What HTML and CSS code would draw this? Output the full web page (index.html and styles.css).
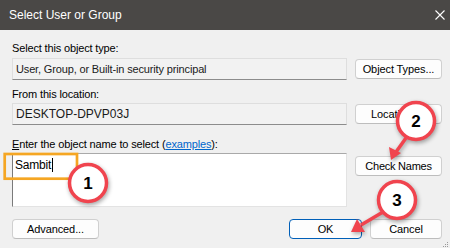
FILE: index.html
```html
<!DOCTYPE html>
<html lang="en">

<head>
    <meta charset="UTF-8">
    <meta name="viewport" content="width=device-width, initial-scale=1.0">
    <title>Select User or Group</title>
    <link rel="stylesheet" href="styles.css">
</head>

<body>
    <div class="window">
        <div class="titlebar">
            <span class="title">Select User or Group</span>
            <svg class="close" width="10" height="10" viewBox="0 0 10 10">
                <path d="M0.5 0.5 L9.5 9.5 M9.5 0.5 L0.5 9.5" stroke="#fff" stroke-width="1.1" />
            </svg>
        </div>

        <div class="content">
            <div class="label first">Select this object type:</div>
            <div class="row">
                <div class="field">User, Group, or Built-in security principal</div>
                <button class="btn">Object Types...</button>
            </div>

            <div class="label second">From this location:</div>
            <div class="row">
                <div class="field host">DESKTOP-DPVP03J</div>
                <button class="btn">Locations...</button>
            </div>

            <div class="label third"><u>E</u>nter the object name to select (<a href="#">examples</a>):</div>
            <div class="row top">
                <div class="names">Sambit<span class="caret"></span></div>
                <button class="btn check">Check Names</button>
            </div>

            <div class="footer">
                <button class="btn">Advanced...</button>
                <div class="actions">
                    <button class="btn ok">OK</button>
                    <button class="btn cancel">Cancel</button>
                </div>
            </div>
        </div>

        <!-- resize grip -->
        <svg class="grip" width="7" height="7" viewBox="0 0 7 7">
            <rect x="5" y="1" width="1" height="1" fill="#9a9a9a" />
            <rect x="3" y="3" width="1" height="1" fill="#9a9a9a" />
            <rect x="5" y="3" width="1" height="1" fill="#9a9a9a" />
            <rect x="1" y="5" width="1" height="1" fill="#9a9a9a" />
            <rect x="3" y="5" width="1" height="1" fill="#9a9a9a" />
            <rect x="5" y="5" width="1" height="1" fill="#9a9a9a" />
        </svg>

        <!-- tutorial annotations drawn over the dialog -->
        <svg class="marks" width="450" height="248" viewBox="0 0 450 248">
            <rect class="box" x="4.7" y="154" width="72.3" height="24.7" />

            <g class="shadow">
                <line class="arrow" x1="406" y1="138" x2="396" y2="152" />
                <polygon class="head" points="391,160 389,147 401,153" />
                <line class="arrow" x1="383" y1="212" x2="361" y2="225" />
                <polygon class="head" points="351,232 357,219 365,232" />

                <circle class="ring" cx="88" cy="183" r="18.5" />
                <circle class="ring" cx="416" cy="121" r="18.5" />
                <circle class="ring" cx="397" cy="200" r="18.5" />
            </g>

            <text class="num" x="88" y="189">1</text>
            <text class="num" x="416" y="127">2</text>
            <text class="num" x="397" y="206">3</text>
        </svg>
    </div>
</body>

</html>
```

FILE: styles.css
```css
body {
    margin: 0;
    font-family: "Liberation Sans", Arial, sans-serif;
    font-size: 11px;
    letter-spacing: -0.15px;
    color: #000;
    background: #f0f0f0;
}

.window {
    position: relative;
    width: 450px;
    height: 248px;
    overflow: hidden;
    background: #f0f0f0;
}

.titlebar {
    height: 30px;
    background: #4a4846;
    display: flex;
    align-items: center;
    justify-content: space-between;
    padding: 0 5px 0 9px;
    box-sizing: border-box;
}

.title {
    color: #fff;
    font-size: 12px;
    letter-spacing: 0;
    padding-bottom: 1px;
}

.content {
    padding: 10px 8px 0 12px;
}

.label {
    height: 16px;
    line-height: 16px;
}

.label.first {
    margin-bottom: 2px;
}

.label.second {
    margin-top: 6px;
    margin-bottom: 1px;
}

.label.third {
    margin-top: 11px;
    margin-bottom: 1px;
}

.label a {
    color: #0066cc;
}

.row {
    display: flex;
    align-items: center;
    gap: 8px;
}

.row.top {
    align-items: flex-start;
}

.field {
    width: 335px;
    height: 22px;
    box-sizing: border-box;
    padding: 0 3px;
    line-height: 20px;
    background: #f2f2f2;
    border: 1px solid #dedede;
    border-bottom-color: #8c8c8c;
    color: #1a1a1a;
}

.field.host {
    font-size: 12px;
    letter-spacing: 0;
}

.names {
    width: 335px;
    height: 54px;
    box-sizing: border-box;
    padding: 3px 2px;
    line-height: 16px;
    font-size: 12px;
    letter-spacing: -0.2px;
    background: #fff;
    border: 1px solid #e3e3e3;
    border-top-color: #a9a9a9;
    border-left-color: #7a7a7a;
}

.caret {
    display: inline-block;
    width: 1px;
    height: 14px;
    background: #000;
    vertical-align: -3px;
    margin-left: 1px;
}

.btn {
    width: 87px;
    height: 20px;
    padding: 0;
    font-family: inherit;
    font-size: 11px;
    letter-spacing: -0.1px;
    color: #000;
    background: #fdfdfd;
    border: 1px solid #d0d0d0;
    border-bottom-color: #bdbdbd;
    border-radius: 4px;
}

.btn.check {
    margin-top: 3px;
    letter-spacing: -0.25px;
}

.footer {
    margin-top: 12px;
    display: flex;
    justify-content: space-between;
}

.actions {
    display: flex;
    gap: 8px;
}

.btn.ok {
    width: 73px;
    border: 1px solid #005fb8;
}

.btn.cancel {
    width: 72px;
}

.grip {
    position: absolute;
    right: 1px;
    bottom: 0;
}

.marks {
    position: absolute;
    top: 0;
    left: 0;
    pointer-events: none;
}

.box {
    fill: none;
    stroke: #f5a623;
    stroke-width: 2.7;
}

.shadow {
    filter: drop-shadow(1px 2px 2px rgba(0, 0, 0, 0.35));
}

.ring {
    fill: #fff;
    stroke: #f0444e;
    stroke-width: 3.5;
}

.arrow {
    stroke: #f0444e;
    stroke-width: 3.5;
}

.head {
    fill: #f0444e;
}

.num {
    font-family: "Liberation Sans", Arial, sans-serif;
    font-weight: bold;
    font-size: 17px;
    letter-spacing: 0;
    text-anchor: middle;
    fill: #000;
}
```
